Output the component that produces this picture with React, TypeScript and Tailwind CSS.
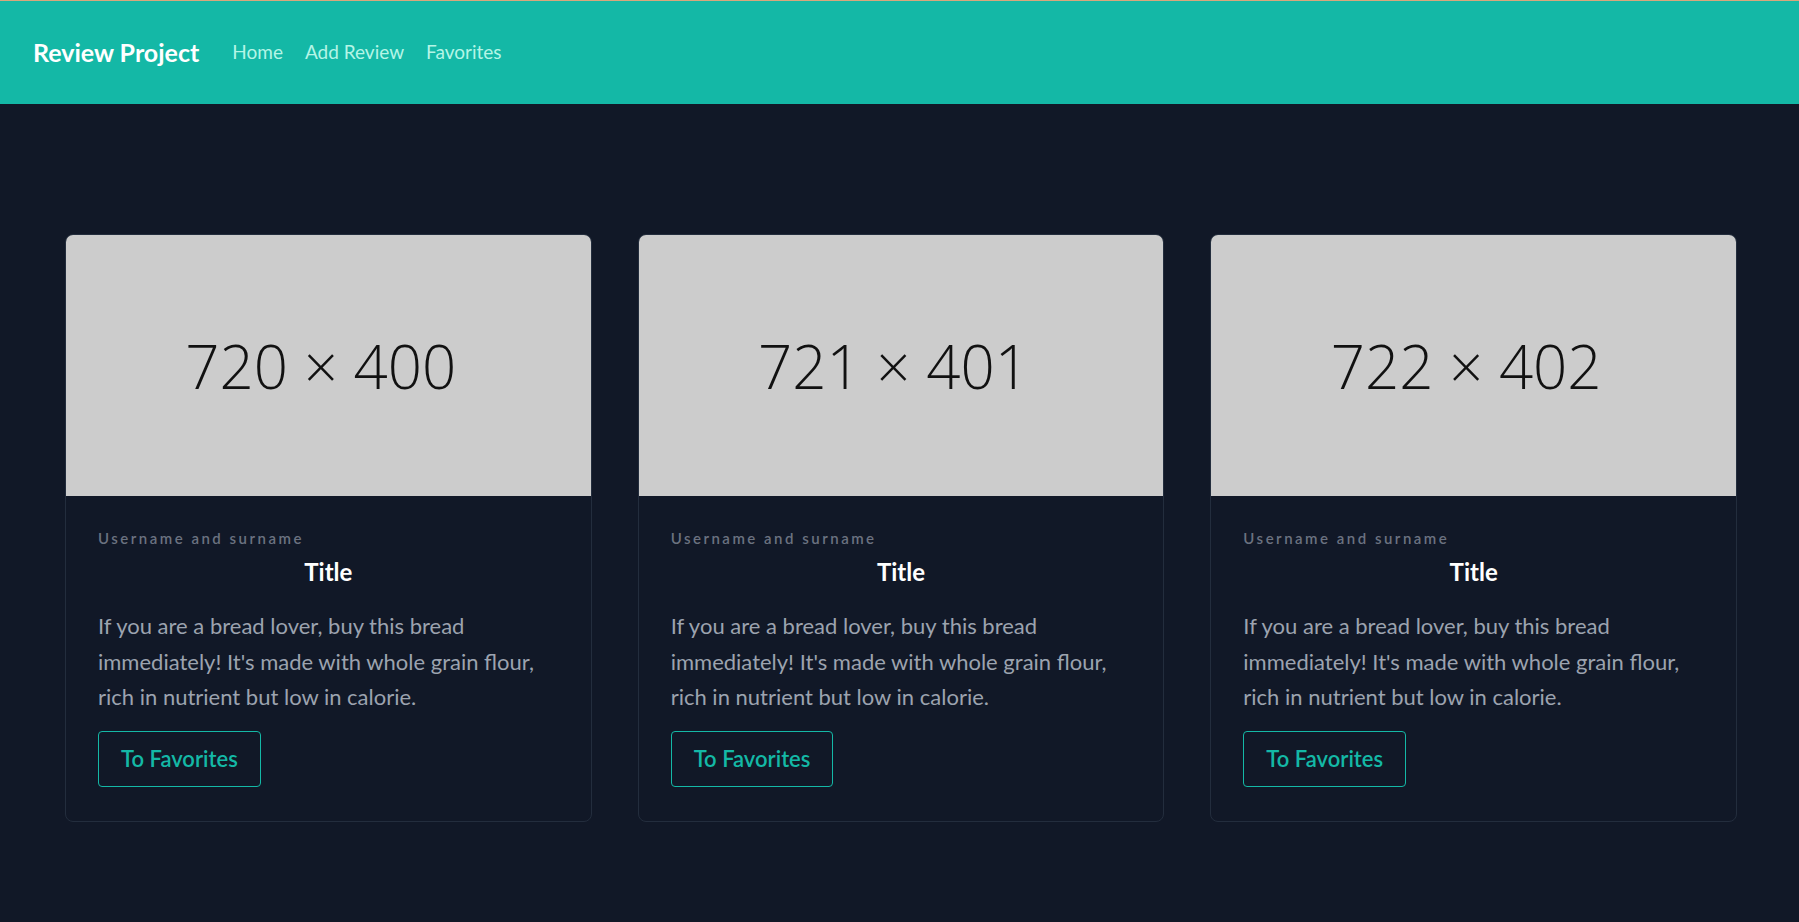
export default function App() {
  const cards = [
    { w: 720, h: 400 },
    { w: 721, h: 401 },
    { w: 722, h: 402 },
  ];

  return (
    <div className="min-h-[922px] bg-[#111827] font-['Lato',sans-serif]">
      <div className="h-px bg-[#d9a77c]" />
      <header className="flex h-[103px] items-center bg-[#14b8a6] pl-[33px]">
        <span className="text-[25px] font-bold text-white">Review Project</span>
        <nav className="ml-[33px] flex gap-[22px] text-[19px] text-[#b4f5e6]">
          <a href="#">Home</a>
          <a href="#">Add Review</a>
          <a href="#">Favorites</a>
        </nav>
      </header>

      <main className="grid grid-cols-3 gap-[46px] pl-[65px] pr-[62px] pt-[130px]">
        {cards.map((card, index) => (
          <div key={index} className="overflow-hidden rounded-lg border border-[#232d3d]">
            <div className="flex h-[261px] items-center justify-center bg-[#cccccc] pr-[15px]">
              <span className="font-['Open_Sans',sans-serif] text-[60px] font-light text-[#111]">
                {card.w} × {card.h}
              </span>
            </div>
            <div className="px-8 pb-[34px] pt-8">
              <p className="text-[15px] font-semibold leading-5 tracking-[2.5px] text-[#6b7280]">
                Username and surname
              </p>
              <h2 className="mt-2 text-center text-2xl font-bold leading-8 text-white">Title</h2>
              <p className="mt-5 text-[22px] leading-[35.5px] text-[#9ca3af]">
                If you are a bread lover, buy this bread immediately! It's made with whole grain flour,
                rich in nutrient but low in calorie.
              </p>
              <button className="mt-4 h-14 rounded border border-[#14b8a6] px-[22px] text-[22px] font-semibold text-[#14b8a6]">
                To Favorites
              </button>
            </div>
          </div>
        ))}
      </main>
    </div>
  );
}
